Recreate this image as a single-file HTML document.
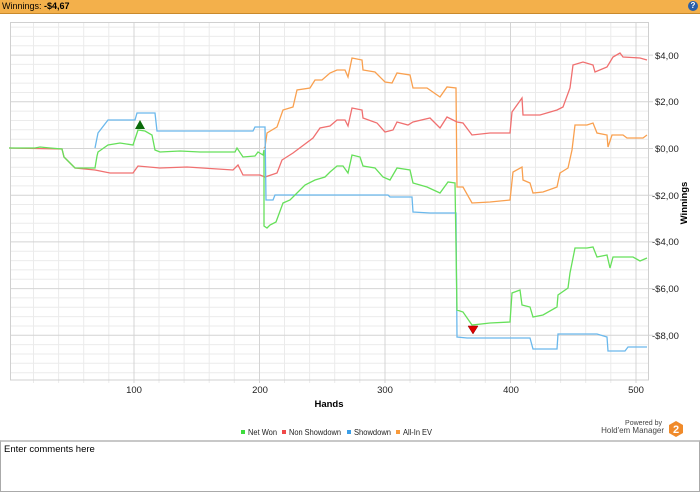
<!DOCTYPE html>
<html><head><meta charset="utf-8"><style>
body{margin:0;width:700px;height:492px;background:#fff;font-family:"Liberation Sans",Tahoma,sans-serif;overflow:hidden;position:relative}
.bar{position:absolute;left:0;top:0;width:700px;height:13px;background:#f3b04b;border-bottom:1px solid #c98a2c;font-size:9px;line-height:13px}
.bar span{padding-left:2px}
.help{position:absolute;right:2px;top:1px;width:10px;height:10px;border-radius:50%;background:#2a5fa8;color:#fff;font-size:8px;line-height:10px;text-align:center;font-weight:bold}
.cbox{position:absolute;left:0;top:440px;font-size:9.5px;padding:2px 3px;box-sizing:border-box;width:700px;height:52px;border:1px solid #aaa;border-top:2px solid #c8c8c8}
svg text{font-family:"Liberation Sans",Tahoma,sans-serif}
</style></head><body>
<div class="bar"><span>Winnings: <b>-$4,67</b></span><div class="help">?</div></div>
<svg width="700" height="440" style="position:absolute;left:0;top:0">
<g stroke="#ebebeb">
<line x1="33.5" y1="22" x2="33.5" y2="383"/><line x1="58.6" y1="22" x2="58.6" y2="383"/><line x1="83.7" y1="22" x2="83.7" y2="383"/><line x1="108.8" y1="22" x2="108.8" y2="383"/>
<line x1="159" y1="22" x2="159" y2="383"/><line x1="184.1" y1="22" x2="184.1" y2="383"/><line x1="209.2" y1="22" x2="209.2" y2="383"/><line x1="234.3" y1="22" x2="234.3" y2="383"/>
<line x1="284.5" y1="22" x2="284.5" y2="383"/><line x1="309.6" y1="22" x2="309.6" y2="383"/><line x1="334.7" y1="22" x2="334.7" y2="383"/><line x1="359.8" y1="22" x2="359.8" y2="383"/>
<line x1="410" y1="22" x2="410" y2="383"/><line x1="435.1" y1="22" x2="435.1" y2="383"/><line x1="460.2" y1="22" x2="460.2" y2="383"/><line x1="485.3" y1="22" x2="485.3" y2="383"/>
<line x1="535.5" y1="22" x2="535.5" y2="383"/><line x1="560.6" y1="22" x2="560.6" y2="383"/><line x1="585.7" y1="22" x2="585.7" y2="383"/><line x1="610.8" y1="22" x2="610.8" y2="383"/>
<line x1="10" y1="27.1" x2="648" y2="27.1"/><line x1="10" y1="36.4" x2="648" y2="36.4"/><line x1="10" y1="45.8" x2="648" y2="45.8"/>
<line x1="10" y1="64.4" x2="648" y2="64.4"/><line x1="10" y1="73.8" x2="648" y2="73.8"/><line x1="10" y1="83.1" x2="648" y2="83.1"/><line x1="10" y1="92.5" x2="648" y2="92.5"/>
<line x1="10" y1="111.1" x2="648" y2="111.1"/><line x1="10" y1="120.5" x2="648" y2="120.5"/><line x1="10" y1="129.8" x2="648" y2="129.8"/><line x1="10" y1="139.2" x2="648" y2="139.2"/>
<line x1="10" y1="157.8" x2="648" y2="157.8"/><line x1="10" y1="167.2" x2="648" y2="167.2"/><line x1="10" y1="176.5" x2="648" y2="176.5"/><line x1="10" y1="185.9" x2="648" y2="185.9"/>
<line x1="10" y1="204.5" x2="648" y2="204.5"/><line x1="10" y1="213.9" x2="648" y2="213.9"/><line x1="10" y1="223.2" x2="648" y2="223.2"/><line x1="10" y1="232.6" x2="648" y2="232.6"/>
<line x1="10" y1="251.2" x2="648" y2="251.2"/><line x1="10" y1="260.6" x2="648" y2="260.6"/><line x1="10" y1="269.9" x2="648" y2="269.9"/><line x1="10" y1="279.3" x2="648" y2="279.3"/>
<line x1="10" y1="297.9" x2="648" y2="297.9"/><line x1="10" y1="307.3" x2="648" y2="307.3"/><line x1="10" y1="316.6" x2="648" y2="316.6"/><line x1="10" y1="326" x2="648" y2="326"/>
<line x1="10" y1="344.6" x2="648" y2="344.6"/><line x1="10" y1="354" x2="648" y2="354"/><line x1="10" y1="363.3" x2="648" y2="363.3"/><line x1="10" y1="372.7" x2="648" y2="372.7"/>
</g>
<g stroke="#d4d4d4">
<line x1="134" y1="22" x2="134" y2="383"/><line x1="259.5" y1="22" x2="259.5" y2="383"/><line x1="385" y1="22" x2="385" y2="383"/><line x1="510.5" y1="22" x2="510.5" y2="383"/><line x1="636" y1="22" x2="636" y2="383"/>
<line x1="10" y1="55.1" x2="653" y2="55.1"/><line x1="10" y1="101.8" x2="653" y2="101.8"/><line x1="10" y1="148.5" x2="653" y2="148.5"/><line x1="10" y1="195.2" x2="653" y2="195.2"/><line x1="10" y1="241.9" x2="653" y2="241.9"/><line x1="10" y1="288.6" x2="653" y2="288.6"/><line x1="10" y1="335.3" x2="653" y2="335.3"/>
</g>
<rect x="10.5" y="22.5" width="638" height="357.5" fill="none" stroke="#d0d0d0"/>
<g fill="none" stroke-width="1.3">
<polyline stroke="#f9a04f" points="264,148 265,147 267,133 277,127 283,110 293,107 297,90 310,88 315,80 322,80 330,73 337,70 345,70 348,77 352,58 362,60 363,70 375,72 385,82 392,83 397,73 410,75 413,88 427,88 440,97 447,87 456,88 457,187 463,187 472,203 490,202 510,200 513,172 522,167 523,180 530,183 533,193 543,192 557,187 560,173 568,168 572,150 575,125 587,125 593,123 597,133 607,135 608,147 612,135 623,135 627,138 643,138 647,135"/>
<polyline stroke="#f07070" points="9,148 62,149 64,157 70,163 75,168 95,170 110,173 133,173 138,166 160,168 187,167 233,170 238,165 243,175 260,175 265,177 277,173 282,160 293,153 313,138 320,128 330,126 337,120 345,120 348,126 352,108 362,110 363,118 377,123 385,132 393,130 397,122 408,125 413,122 430,118 440,128 447,117 457,122 463,123 472,135 490,133 510,133 512,112 522,98 523,115 540,115 557,110 563,107 570,88 573,65 583,62 593,65 595,72 607,67 613,57 620,53 623,57 640,58 647,60"/>
<polyline stroke="#6ab8ec" points="95,148 98,133 108,120 135,120 137,113 155,113 157,131 253,131 255,127 265,127 266,200 273,200 275,195 388,195 390,197 412,197 413,212 430,213 456,213 457,337 467,338 530,338 533,349 557,349 558,334 597,334 607,337 608,351 625,351 628,347 647,347"/>
<polyline stroke="#66e05a" points="9,148 20,148 35,148 40,147 50,148 62,149 64,157 70,163 75,168 95,168 97,156 98,152 108,145 120,143 133,145 137,133 138,130 145,131 152,135 155,150 160,152 180,151 200,152 235,152 237,148 243,157 255,156 258,152 263,155 264,150 264,226 267,228 270,225 276,222 283,203 290,200 295,195 305,185 315,180 325,177 330,172 337,166 343,166 348,173 352,155 360,157 363,166 375,168 383,177 390,180 397,168 410,170 413,183 427,187 440,193 448,182 455,183 457,310 463,312 472,325 490,323 510,322 512,293 520,290 522,305 530,307 533,317 543,315 557,307 558,295 568,288 570,273 575,248 587,248 593,247 597,257 607,255 610,268 613,257 633,257 640,261 647,258"/>
</g>
<polygon points="135,129 145,129 140,120" fill="#0a6a0a"/>
<polygon points="468,326 478,326 473,334" fill="#e00000" stroke="#800" stroke-width=".5"/>
<g font-size="9.5" fill="#222">
<text x="655" y="59">$4,00</text><text x="655" y="105">$2,00</text><text x="655" y="152">$0,00</text>
<text x="652" y="199">-$2,00</text><text x="652" y="245">-$4,00</text><text x="652" y="292">-$6,00</text><text x="652" y="339">-$8,00</text>
<text x="134" y="393" text-anchor="middle">100</text><text x="260" y="393" text-anchor="middle">200</text><text x="385" y="393" text-anchor="middle">300</text><text x="511" y="393" text-anchor="middle">400</text><text x="636" y="393" text-anchor="middle">500</text>
</g>
<text x="329" y="407" font-size="9.5" font-weight="bold" text-anchor="middle">Hands</text>
<text transform="translate(687,203) rotate(-90)" font-size="9.5" font-weight="bold" text-anchor="middle">Winnings</text>
<g font-size="8" fill="#222">
<rect x="241" y="430" width="4" height="4" fill="#3ddc3d"/><text x="248" y="435" textLength="29" lengthAdjust="spacingAndGlyphs">Net Won</text>
<rect x="282" y="430" width="4" height="4" fill="#f04848"/><text x="289" y="435" textLength="52" lengthAdjust="spacingAndGlyphs">Non Showdown</text>
<rect x="347" y="430" width="4" height="4" fill="#3a9ee8"/><text x="354" y="435" textLength="37" lengthAdjust="spacingAndGlyphs">Showdown</text>
<rect x="396" y="430" width="4" height="4" fill="#f99a3a"/><text x="403" y="435" textLength="29" lengthAdjust="spacingAndGlyphs">All-In EV</text>
<text x="662" y="425" font-size="7" text-anchor="end" fill="#444">Powered by</text>
<text x="664" y="433" font-size="8" text-anchor="end" fill="#444">Hold'em Manager</text>
</g>
<polygon points="676,421 683,425 683,433 676,437 669,433 669,425" fill="#f08a2a"/>
<text x="676" y="433" font-size="11" font-weight="bold" fill="#fff" text-anchor="middle">2</text>
</svg>
<div class="cbox">Enter comments here</div>
</body></html>
